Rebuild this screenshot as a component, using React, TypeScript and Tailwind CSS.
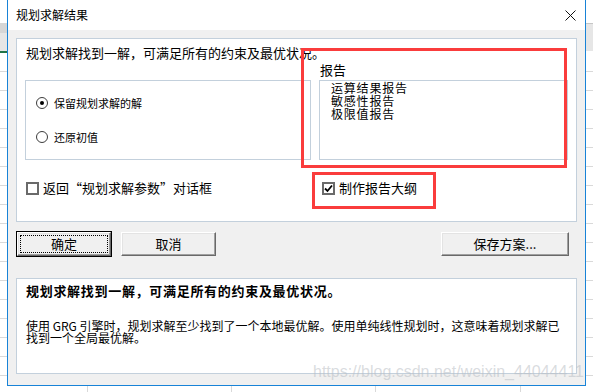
import React from 'react';

const cjk = "font-['Noto_Sans_CJK_SC','Liberation_Sans',sans-serif]";

function Radio({ checked, label }: { checked?: boolean; label: string }) {
  return (
    <div className="flex h-[14px] items-center gap-[6px] text-[11px] leading-[14px] text-black">
      <span className="flex h-[12px] w-[12px] items-center justify-center rounded-full border-[1.5px] border-[#3c3c3c] bg-white">
        {checked && <span className="h-[4px] w-[4px] rounded-full bg-black" />}
      </span>
      <span>{label}</span>
    </div>
  );
}

function CheckBox({ checked, label }: { checked?: boolean; label: string }) {
  return (
    <div className="flex h-[16px] items-center gap-[4px] text-[13px] leading-[16px] text-black">
      <span className="flex h-[13px] w-[13px] items-center justify-center border-2 border-[#6a6a6a] bg-white">
        {checked && (
          <svg width="9" height="9" viewBox="0 0 9 9">
            <path d="M1 4.5 L3.5 7 L8 1.5" fill="none" stroke="#000" strokeWidth="1.8" />
          </svg>
        )}
      </span>
      <span>{label}</span>
    </div>
  );
}

function Button({ label, primary, className }: { label: string; primary?: boolean; className?: string }) {
  return (
    <div
      className={
        'relative flex h-[26px] items-center justify-center text-[13px] leading-[16px] text-black ' +
        (primary ? 'border border-black ' : 'border border-transparent ') +
        (className ?? '')
      }
    >
      <div className="absolute inset-0 border border-t-white border-l-white border-r-[#696969] border-b-[#696969] bg-[#f0f0f0] shadow-[inset_-1px_-1px_0_#a0a0a0,inset_1px_1px_0_#e3e3e3]" />
      {primary && <div className="absolute inset-[3px] border border-dotted border-black" />}
      <span className="relative">{label}</span>
    </div>
  );
}

function GridStrip() {
  return (
    <div className="flex-1 bg-[repeating-linear-gradient(to_bottom,#ffffff_0px,#ffffff_18px,#d9d9d9_18px,#d9d9d9_19px)]" />
  );
}

export default function App() {
  return (
    <div className={`relative flex h-[392px] w-[593px] overflow-hidden bg-white ${cjk}`}>
      {/* excel background, left */}
      <div className="flex w-[7px] flex-col">
        <div className="h-[23px] bg-white" />
        <div className="h-[10px] bg-[#d6d6d6]" />
        <div className="h-[18px] bg-[#e6e6e6]" />
        <div className="h-[2px] bg-[#217346]" />
        <GridStrip />
      </div>

      {/* dialog column */}
      <div className="flex w-[579px] flex-col">
        <div className="flex h-[386px] flex-col border-x border-b border-[#1883d7] bg-[#f0f0f0]">
          {/* title bar */}
          <div className="flex h-[30px] items-center justify-between bg-white pl-[8px] pr-[9px]">
            <span className="text-[12px] leading-[16px] text-black">规划求解结果</span>
            <svg width="11" height="11" viewBox="0 0 11 11">
              <path d="M0.5 0.5 L10.5 10.5 M10.5 0.5 L0.5 10.5" stroke="#111" strokeWidth="1" />
            </svg>
          </div>

          {/* body */}
          <div className="flex flex-1 flex-col px-[8px] pt-[8px]">
            {/* top panel */}
            <div className="flex h-[184px] flex-col border border-[#c3d0dc] bg-white px-[8px] pt-[5px]">
              <div className="pl-[1px] text-[13px] leading-[18px] text-black">
                规划求解找到一解，可满足所有的约束及最优状况。
              </div>
              <div className="flex items-end gap-[8px]">
                <div className="flex h-[80px] w-[288px] flex-col gap-[20px] border border-[#c3d0dc] pl-[10px] pt-[15px]">
                  <Radio checked label="保留规划求解的解" />
                  <Radio label="还原初值" />
                </div>
                <div className="flex flex-col">
                  <div className="pl-[1px] text-[13px] leading-[16px] text-black">报告</div>
                  <div className="mt-[2px] h-[80px] w-[249px] border border-[#c3d0dc] pl-[11px] text-[12px] leading-[13px] tracking-[0.8px] text-black">
                    <div>运算结果报告</div>
                    <div>敏感性报告</div>
                    <div>极限值报告</div>
                  </div>
                </div>
              </div>
              <div className="mt-[20px] flex">
                <div className="w-[296px] pl-[1px]">
                  <CheckBox label="返回“规划求解参数”对话框" />
                </div>
                <div className="pl-[1px]">
                  <CheckBox checked label="制作报告大纲" />
                </div>
              </div>
            </div>

            {/* buttons */}
            <div className="mt-[9px] flex gap-[8px]">
              <Button primary label="确定" className="w-[96px]" />
              <Button label="取消" className="w-[97px]" />
              <Button label="保存方案..." className="ml-auto mr-[7px] w-[130px]" />
            </div>

            {/* message panel */}
            <div className="mt-[21px] h-[96px] border border-[#c3d0dc] bg-white pl-[9px] pr-[8px] pt-[4px] text-black">
              <div className="text-[13px] font-bold leading-[16px] tracking-[0.7px]">
                规划求解找到一解，可满足所有的约束及最优状况。
              </div>
              <div className="mt-[21px] text-[12px] leading-[12px]">
                使用 GRG 引擎时，规划求解至少找到了一个本地最优解。使用单纯线性规划时，这意味着规划求解已找到一个全局最优解。
              </div>
            </div>
          </div>
        </div>
        {/* excel background, below */}
        <div className="flex flex-1">
          <div className="w-[81px] border-r border-[#d9d9d9]" />
          <div className="w-[144px] border-r border-[#d9d9d9]" />
          <div className="w-[144px] border-r border-[#d9d9d9]" />
          <div className="w-[145px] border-r border-[#d9d9d9]" />
        </div>
      </div>

      {/* excel background, right */}
      <div className="flex w-[7px] flex-col">
        <div className="h-[23px] bg-white" />
        <div className="h-[28px] border-t border-[#c6c6c6] bg-[#e6e6e6]" />
        <div className="h-[2px] bg-white" />
        <GridStrip />
      </div>

      {/* red annotations */}
      <div className="absolute left-[301px] top-[48px] h-[120px] w-[266px] border-[3px] border-[#fa3c3c]" />
      <div className="absolute left-[312px] top-[172px] h-[37px] w-[124px] border-[3px] border-[#fa3c3c]" />

      {/* watermark */}
      <div className="absolute left-[313px] top-[363px] font-['Liberation_Sans',sans-serif] text-[16px] leading-[18px] text-[rgba(185,190,196,0.55)]">
        https://blog.csdn.net/weixin_44044411
      </div>
    </div>
  );
}
